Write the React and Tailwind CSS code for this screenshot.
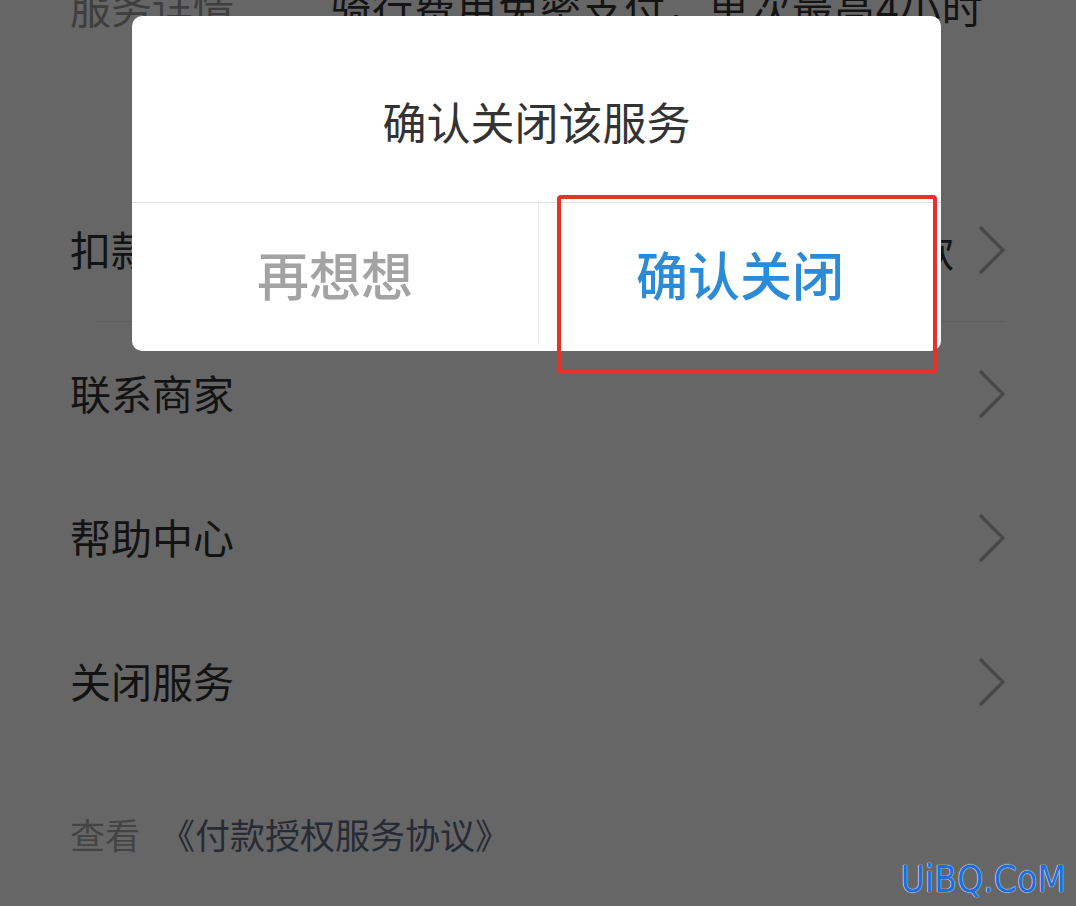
const FONT = "font-['Noto_Sans_CJK_SC','Noto_Sans',sans-serif]"

const ROWS = [
  { label: '扣款方式', value: '免密支付扣款', border: true },
  { label: '联系商家' },
  { label: '帮助中心' },
  { label: '关闭服务' },
]

function Chevron() {
  return (
    <svg aria-hidden="true" width="28" height="50" viewBox="0 0 28 50" fill="none" stroke="#474747" strokeWidth="3.2" strokeLinecap="round">
      <polyline points="3,3 25,25 3,47" />
    </svg>
  )
}

export default function App() {
  return (
    <div className={`relative h-[906px] w-[1076px] overflow-hidden bg-[#666666] ${FONT}`}>
      {/* page behind the mask */}
      <div className="pl-[70px] pr-[70px]">
        <div className="-mt-[24px] flex h-[60px] items-center text-[41px] leading-none">
          <span className="w-[260px] shrink-0 text-[#3e3e3e]">服务详情</span>
          <span className="tracking-[1px] text-[#141414]">骑行费用免密支付，单次最高4小时</span>
        </div>
        <div className="h-[142px]" />
        {ROWS.map((r) => (
          <div
            key={r.label}
            className={`flex h-[144px] items-center justify-between ${r.border ? 'ml-[25px] border-b border-[#5e5e5e]' : ''}`}
          >
            <span className={`-mt-[3px] text-[41px] leading-none text-[#131313] ${r.border ? '-ml-[25px]' : ''}`}>{r.label}</span>
            <div className="flex items-center gap-[24px]">
              {r.value && <span className="text-[41px] leading-none text-[#131313]">{r.value}</span>}
              <Chevron />
            </div>
          </div>
        ))}
        <div className="mt-[54px] flex h-[50px] items-center gap-[20px] text-[35px] leading-none">
          <span className="text-[#444444]">查看</span>
          <span className="text-[#272b34]">《付款授权服务协议》</span>
        </div>
      </div>

      {/* dialog */}
      <div className="absolute left-[132px] top-[16px] flex h-[335px] w-[809px] flex-col overflow-hidden rounded-[10px] bg-white">
        <div className="flex h-[186px] items-center justify-center pt-[24px] text-[44px] leading-none text-[#333333]">
          确认关闭该服务
        </div>
        <div className="flex flex-1 border-t border-[#e3e3e3] pb-[6px]">
          <div className="flex w-[407px] items-center justify-center border-r border-[#ececec] text-[52px] font-medium leading-none text-[#a3a3a3]">
            再想想
          </div>
          <div className="flex flex-1 items-center justify-center text-[52px] font-medium leading-none text-[#2b8bd6]">
            确认关闭
          </div>
        </div>
      </div>

      {/* annotation box */}
      <div className="absolute left-[557px] top-[195px] h-[179px] w-[380px] rounded-[4px] border-4 border-[#e8312a]" />

      {/* watermark */}
      <div className="absolute bottom-[8px] right-[10px] font-['Liberation_Sans_Narrow','DejaVu_Sans_Condensed',sans-serif] text-[37px] leading-none text-[#1a6fe0] [text-shadow:0_0_1px_#fff,0_0_1px_#fff]">
        UiBQ.CoM
      </div>
    </div>
  )
}
